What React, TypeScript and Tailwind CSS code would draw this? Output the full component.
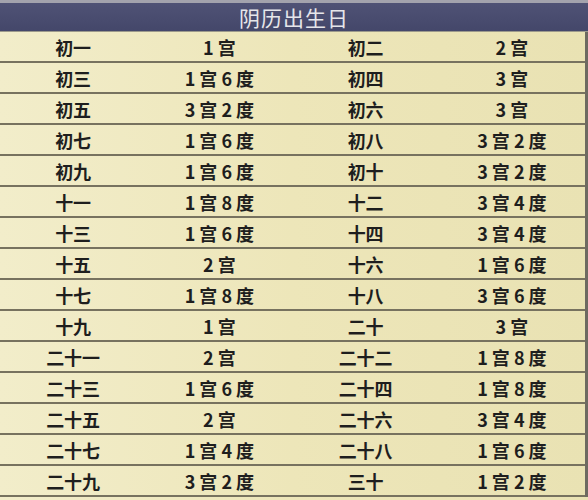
import React from "react";

const rows: [string, string, string, string][] = [
  ["初一", "1 宫", "初二", "2 宫"],
  ["初三", "1 宫 6 度", "初四", "3 宫"],
  ["初五", "3 宫 2 度", "初六", "3 宫"],
  ["初七", "1 宫 6 度", "初八", "3 宫 2 度"],
  ["初九", "1 宫 6 度", "初十", "3 宫 2 度"],
  ["十一", "1 宫 8 度", "十二", "3 宫 4 度"],
  ["十三", "1 宫 6 度", "十四", "3 宫 4 度"],
  ["十五", "2 宫", "十六", "1 宫 6 度"],
  ["十七", "1 宫 8 度", "十八", "3 宫 6 度"],
  ["十九", "1 宫", "二十", "3 宫"],
  ["二十一", "2 宫", "二十二", "1 宫 8 度"],
  ["二十三", "1 宫 6 度", "二十四", "1 宫 8 度"],
  ["二十五", "2 宫", "二十六", "3 宫 4 度"],
  ["二十七", "1 宫 4 度", "二十八", "1 宫 6 度"],
  ["二十九", "3 宫 2 度", "三十", "1 宫 2 度"],
];

export default function App() {
  return (
    <div
      className="w-[588px] h-[500px] overflow-hidden flex flex-col bg-gradient-to-r from-[#f2edca] via-[#ede6b9] to-[#e9e2b3]"
      style={{ fontFamily: '"Noto Sans CJK SC", "Noto Sans", sans-serif' }}
    >
      <div className="h-[32px] shrink-0 flex flex-col">
        <div className="h-[3px] bg-[#a3a3ad]" />
        <div className="flex-1 bg-gradient-to-b from-[#4f5275] to-[#44476a] flex items-center justify-center text-[21px] leading-none text-[#e6e6ea] tracking-[1px] border-b border-[#9c9a8c]">
          阴历出生日
        </div>
      </div>
      <div className="flex flex-col border-r-[3px] border-[#6d6a60]">
        {rows.map((r, i) => (
          <div
            key={i}
            className="h-[31px] shrink-0 grid grid-cols-4 items-center border-b-2 border-[#77725f] text-[18px] leading-none font-bold text-[#1e1e1e]"
          >
            <div className="text-center">{r[0]}</div>
            <div className="text-center whitespace-pre">{r[1]}</div>
            <div className="text-center">{r[2]}</div>
            <div className="text-center whitespace-pre">{r[3]}</div>
          </div>
        ))}
      </div>
    </div>
  );
}
